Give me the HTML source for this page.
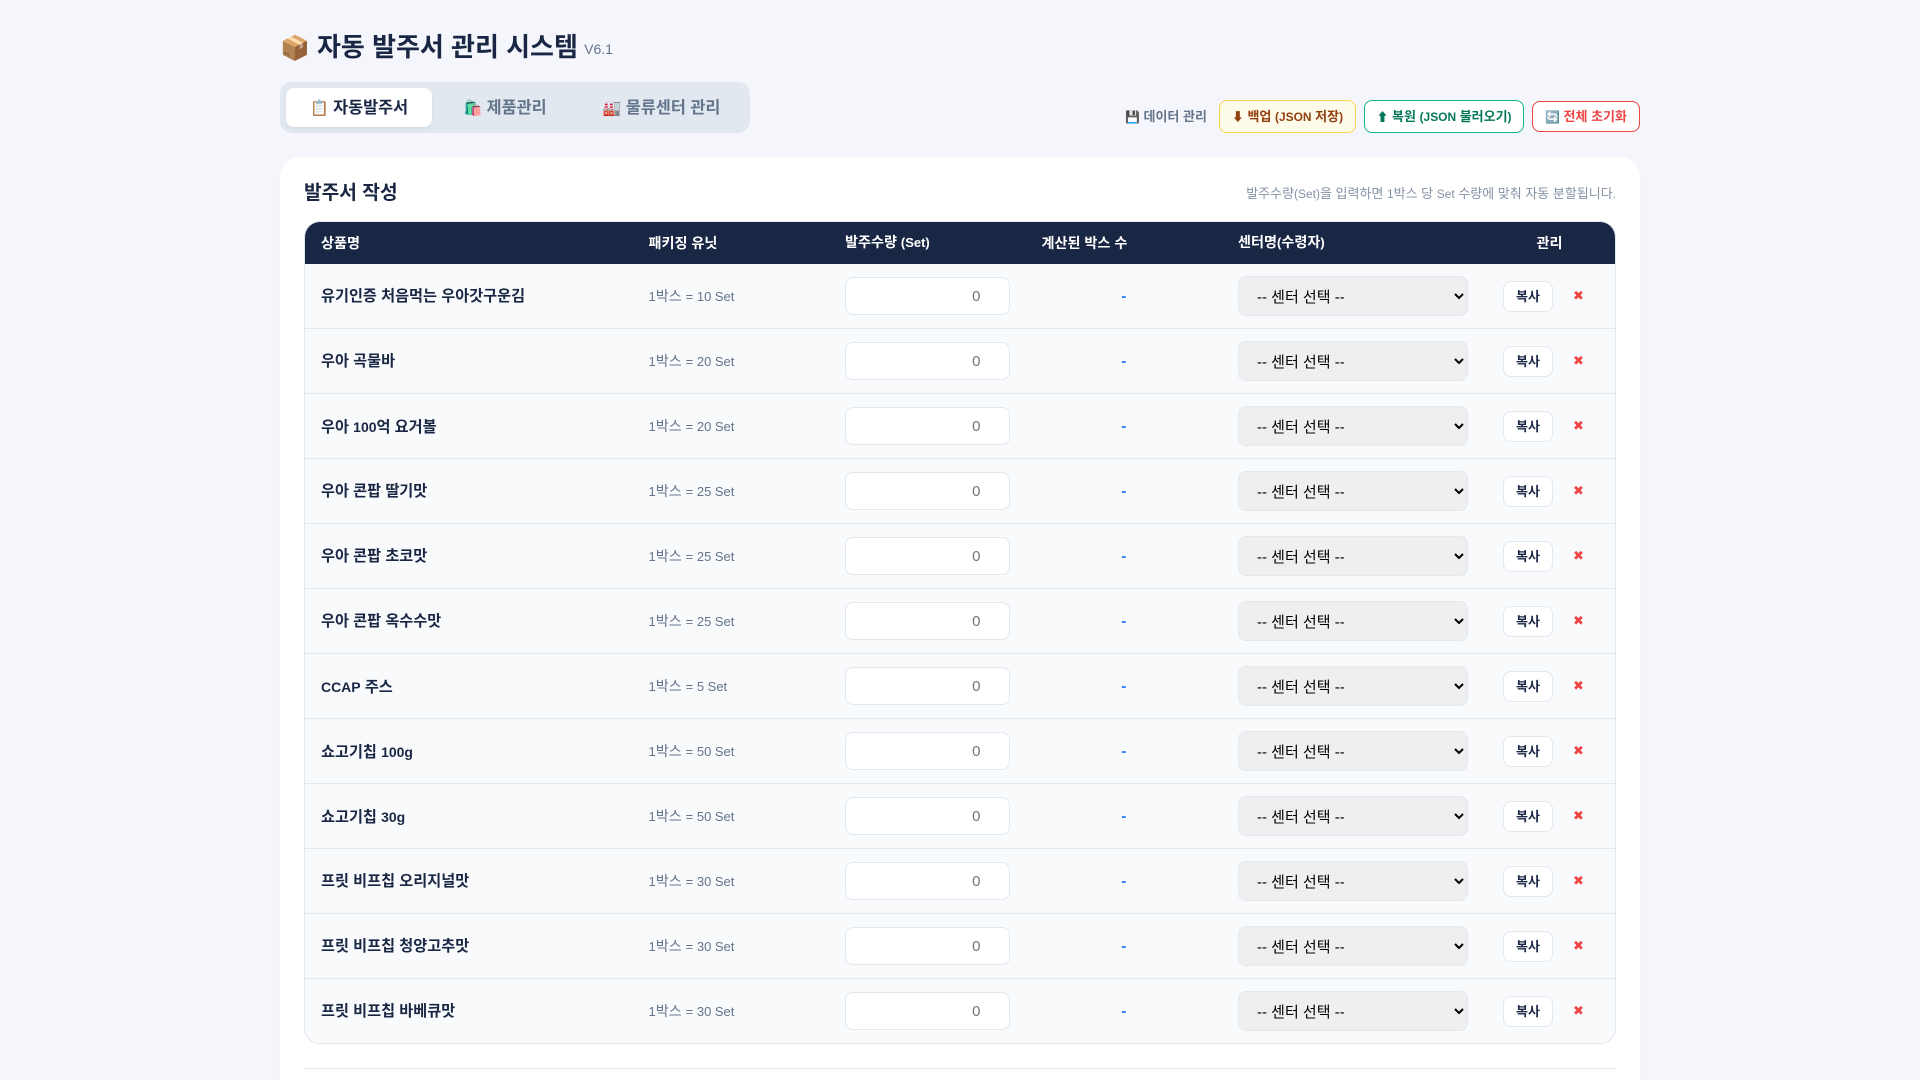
<!DOCTYPE html>
<html lang="ko">
<head>
<meta charset="utf-8">
<title>자동 발주서 관리 시스템</title>
<style>
*{box-sizing:border-box}
html,body{margin:0;padding:0;width:1920px;height:1080px;overflow:hidden}
body{background:#f4f6fb;color:#1a2744;font-family:"Liberation Sans","Noto Sans CJK KR",sans-serif}
#root{position:relative;width:1920px;height:1080px;overflow:hidden}
i{font-style:normal;font-size:.92em}
h1{position:absolute;left:280px;top:29px;margin:0;font-size:26px;line-height:36px;font-weight:700;color:#1a2744;white-space:nowrap}
h1 small{font-size:14px;font-weight:400;color:#64748b;margin-left:-1px;position:relative;top:-2px}
.tabs{position:absolute;left:280px;top:82px;width:470px;height:51px;background:#e2e8f0;border-radius:12px}
.tab{position:absolute;top:6px;height:39px;line-height:40px;border-radius:8px;text-align:center;font-size:16.3px;font-weight:700;color:#64748b;white-space:nowrap}
.tab.on{background:#fff;color:#1a2744;box-shadow:0 2px 4px rgba(0,0,0,.05)}
.lbl{position:absolute;left:1125px;top:100px;line-height:33px;font-size:13px;color:#64748b;font-weight:700;white-space:nowrap}
.b{position:absolute;border-radius:8px;text-align:center;font-size:13px;font-weight:700;white-space:nowrap}
.card{position:absolute;left:280px;top:157px;width:1360px;height:923px;background:#fff;border-radius:20px 20px 0 0;box-shadow:0 4px 6px rgba(0,0,0,.01)}
h2{position:absolute;left:24px;top:25px;margin:0;font-size:19.2px;line-height:24px;font-weight:700;color:#1a2744}
.hint{position:absolute;right:24px;top:29px;line-height:16px;font-size:13px;color:#8492a6;white-space:nowrap}
.wrap{position:absolute;left:24px;top:64px;width:1312px;height:823px;border:1px solid #e2e8f0;border-radius:16px;overflow:hidden;background:#f8fafc}
table{border-collapse:separate;border-spacing:0;table-layout:fixed;width:1310px}
th{background:#1a2744;color:#fff;font-size:14.13px;line-height:20px;font-weight:700;text-align:left;height:42px;padding:0 16px 1px}
td{height:65px;padding:0 16px;border-bottom:1px solid #e2e8f0;line-height:20px;vertical-align:middle}
tr:last-child td{border-bottom:0;height:64px}
td.n{font-weight:700;color:#1a2744;font-size:15.2px;padding-top:2px}
td.u{color:#64748b;font-size:14.13px}
td.c{color:#3b82f6;font-weight:700;text-align:center;font-size:16px}
td.c b{position:relative;top:1px}
input{display:block;width:100%;height:38px;border:1px solid #e2e8f0;border-radius:8px;background:#fff;text-align:right;padding:8px 13px 8px 12px;font:15px "Liberation Sans","Noto Sans CJK KR",sans-serif}
input::placeholder{color:#757575}
select{display:block;width:100%;height:40px;border:1px solid #e2e8f0;border-radius:8px;background-color:#efefef;padding:9px 14px 7px;font:15px "Liberation Sans","Noto Sans CJK KR",sans-serif;color:#000}
td.a{padding:0;position:relative}
.copy{position:absolute;left:19px;top:17px;width:50px;height:31px;line-height:29px;background:#fff;border:1px solid #e2e8f0;border-radius:8px;text-align:center;font-size:13px;font-weight:700;color:#1a2744}
.x{position:absolute;left:89px;top:22px;line-height:20px;font-size:12.8px;color:#ef4444}
.rule{position:absolute;left:24px;top:911px;width:1312px;height:1px;background:#e2e8f0}
</style>
</head>
<body>
<div id="root">
<h1><i>📦</i> 자동 발주서 관리 시스템 <small>V6.1</small></h1>
<div class="tabs">
<div class="tab on" style="left:6px;width:146px"><i>📋</i> 자동발주서</div>
<div class="tab" style="left:152px;width:146px"><i>🛍️</i> 제품관리</div>
<div class="tab" style="left:298px;width:167px"><i>🏭</i> 물류센터 관리</div>
</div>
<span class="lbl"><i>💾</i> 데이터 관리</span>
<div class="b" style="left:1219px;top:100px;width:137px;height:33px;line-height:31px;background:#fffbeb;border:1px solid #fcd34d;color:#92400e"><i>⬇</i> 백업 <i>(JSON</i> 저장<i>)</i></div>
<div class="b" style="left:1364px;top:100px;width:160px;height:33px;line-height:31px;background:#fff;border:1px solid #10b981;color:#047857"><i>⬆</i> 복원 <i>(JSON</i> 불러오기<i>)</i></div>
<div class="b" style="left:1532px;top:101px;width:108px;height:31px;line-height:29px;background:#fff;border:1px solid #ef4444;color:#ef4444"><i>🔄</i> 전체 초기화</div>
<div class="card">
<h2>발주서 작성</h2>
<div class="hint">발주수량<i>(Set)</i>을 입력하면 <i>1</i>박스 당 <i>Set</i> 수량에 맞춰 자동 분할됩니다<i>.</i></div>
<div class="wrap">
<table>
<colgroup><col style="width:25%"><col style="width:15%"><col style="width:15%"><col style="width:15%"><col style="width:20%"><col style="width:10%"></colgroup>
<thead><tr><th>상품명</th><th>패키징 유닛</th><th>발주수량 <i>(Set)</i></th><th>계산된 박스 수</th><th>센터명<i>(</i>수령자<i>)</i></th><th style="text-align:center">관리</th></tr></thead>
<tbody>
<tr><td class="n">유기인증 처음먹는 우아갓구운김</td><td class="u"><i>1</i>박스 <i>= 10 Set</i></td><td><input type="number" placeholder="0"></td><td class="c"><b>-</b></td><td><select><option>-- 센터 선택 --</option></select></td><td class="a"><div class="copy">복사</div><div class="x">✖</div></td></tr>
<tr><td class="n">우아 곡물바</td><td class="u"><i>1</i>박스 <i>= 20 Set</i></td><td><input type="number" placeholder="0"></td><td class="c"><b>-</b></td><td><select><option>-- 센터 선택 --</option></select></td><td class="a"><div class="copy">복사</div><div class="x">✖</div></td></tr>
<tr><td class="n">우아 <i>100</i>억 요거볼</td><td class="u"><i>1</i>박스 <i>= 20 Set</i></td><td><input type="number" placeholder="0"></td><td class="c"><b>-</b></td><td><select><option>-- 센터 선택 --</option></select></td><td class="a"><div class="copy">복사</div><div class="x">✖</div></td></tr>
<tr><td class="n">우아 콘팝 딸기맛</td><td class="u"><i>1</i>박스 <i>= 25 Set</i></td><td><input type="number" placeholder="0"></td><td class="c"><b>-</b></td><td><select><option>-- 센터 선택 --</option></select></td><td class="a"><div class="copy">복사</div><div class="x">✖</div></td></tr>
<tr><td class="n">우아 콘팝 초코맛</td><td class="u"><i>1</i>박스 <i>= 25 Set</i></td><td><input type="number" placeholder="0"></td><td class="c"><b>-</b></td><td><select><option>-- 센터 선택 --</option></select></td><td class="a"><div class="copy">복사</div><div class="x">✖</div></td></tr>
<tr><td class="n">우아 콘팝 옥수수맛</td><td class="u"><i>1</i>박스 <i>= 25 Set</i></td><td><input type="number" placeholder="0"></td><td class="c"><b>-</b></td><td><select><option>-- 센터 선택 --</option></select></td><td class="a"><div class="copy">복사</div><div class="x">✖</div></td></tr>
<tr><td class="n"><i>CCAP</i> 주스</td><td class="u"><i>1</i>박스 <i>= 5 Set</i></td><td><input type="number" placeholder="0"></td><td class="c"><b>-</b></td><td><select><option>-- 센터 선택 --</option></select></td><td class="a"><div class="copy">복사</div><div class="x">✖</div></td></tr>
<tr><td class="n">쇼고기칩 <i>100g</i></td><td class="u"><i>1</i>박스 <i>= 50 Set</i></td><td><input type="number" placeholder="0"></td><td class="c"><b>-</b></td><td><select><option>-- 센터 선택 --</option></select></td><td class="a"><div class="copy">복사</div><div class="x">✖</div></td></tr>
<tr><td class="n">쇼고기칩 <i>30g</i></td><td class="u"><i>1</i>박스 <i>= 50 Set</i></td><td><input type="number" placeholder="0"></td><td class="c"><b>-</b></td><td><select><option>-- 센터 선택 --</option></select></td><td class="a"><div class="copy">복사</div><div class="x">✖</div></td></tr>
<tr><td class="n">프릿 비프칩 오리지널맛</td><td class="u"><i>1</i>박스 <i>= 30 Set</i></td><td><input type="number" placeholder="0"></td><td class="c"><b>-</b></td><td><select><option>-- 센터 선택 --</option></select></td><td class="a"><div class="copy">복사</div><div class="x">✖</div></td></tr>
<tr><td class="n">프릿 비프칩 청양고추맛</td><td class="u"><i>1</i>박스 <i>= 30 Set</i></td><td><input type="number" placeholder="0"></td><td class="c"><b>-</b></td><td><select><option>-- 센터 선택 --</option></select></td><td class="a"><div class="copy">복사</div><div class="x">✖</div></td></tr>
<tr><td class="n">프릿 비프칩 바베큐맛</td><td class="u"><i>1</i>박스 <i>= 30 Set</i></td><td><input type="number" placeholder="0"></td><td class="c"><b>-</b></td><td><select><option>-- 센터 선택 --</option></select></td><td class="a"><div class="copy">복사</div><div class="x">✖</div></td></tr>
</tbody>
</table>
</div>
<div class="rule"></div>
</div>
</div>
</body>
</html>
